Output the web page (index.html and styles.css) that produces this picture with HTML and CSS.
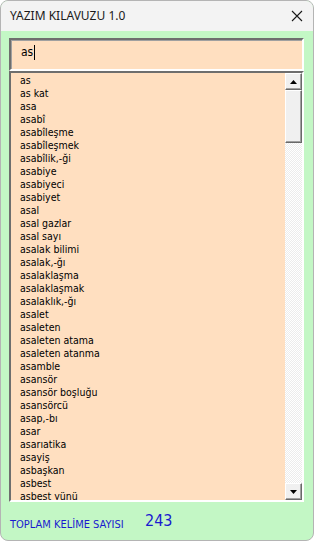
FILE: index.html
```html
<!DOCTYPE html>
<html lang="tr">
<head>
<meta charset="utf-8">
<title>YAZIM KILAVUZU 1.0</title>
<link rel="stylesheet" href="styles.css">
</head>
<body>
<div class="window">
  <div class="titlebar">
    <span class="title">YAZIM KILAVUZU 1.0</span>
    <svg class="close" width="12" height="12" viewBox="0 0 12 12"><path d="M1 1L11 11M11 1L1 11" stroke="#1a1a1a" stroke-width="1.1" fill="none"/></svg>
  </div>
  <div class="content">
    <div class="input"><span class="typed">as</span><span class="caret"></span></div>
    <div class="list">
      <ul class="items">
        <li>as</li><li>as kat</li><li>asa</li><li>asabî</li><li>asabîleşme</li><li>asabîleşmek</li><li>asabîlik,-ği</li><li>asabiye</li><li>asabiyeci</li><li>asabiyet</li><li>asal</li><li>asal gazlar</li><li>asal sayı</li><li>asalak bilimi</li><li>asalak,-ğı</li><li>asalaklaşma</li><li>asalaklaşmak</li><li>asalaklık,-ğı</li><li>asalet</li><li>asaleten</li><li>asaleten atama</li><li>asaleten atanma</li><li>asamble</li><li>asansör</li><li>asansör boşluğu</li><li>asansörcü</li><li>asap,-bı</li><li>asar</li><li>asarıatika</li><li>asayiş</li><li>asbaşkan</li><li>asbest</li><li>asbest yünü</li>
      </ul>
      <div class="scrollbar">
        <div class="btn"><svg width="7" height="4" viewBox="0 0 7 4"><path d="M3.5 0L7 4H0Z" fill="#000"/></svg></div>
        <div class="track"><div class="thumb"></div></div>
        <div class="btn"><svg width="7" height="4" viewBox="0 0 7 4"><path d="M0 0H7L3.5 4Z" fill="#000"/></svg></div>
      </div>
    </div>
    <div class="footer">
      <span class="label">TOPLAM KELİME SAYISI</span>
      <span class="count">243</span>
    </div>
  </div>
</div>
</body>
</html>
```
FILE: styles.css
```css
html, body {
  margin: 0;
  padding: 0;
  background: #ffffff;
}
.window {
  box-sizing: border-box;
  width: 314px;
  height: 541px;
  border: 1px solid #b4b4b4;
  border-radius: 8px;
  overflow: hidden;
  display: flex;
  flex-direction: column;
  background: #c3f7c5;
}
.titlebar {
  height: 30px;
  flex: none;
  background: #f3f3f3;
  display: flex;
  align-items: center;
  justify-content: space-between;
  padding: 0 9px 0 9px;
}
.title {
  font-family: "Noto Sans", "Open Sans", sans-serif;
  font-size: 12px;
  color: #1a1a1a;
  margin-top: -1px;
}
.close {
  margin-top: -1px;
  margin-right: 1px;
}
.content {
  flex: 1;
  display: flex;
  flex-direction: column;
  padding: 7px 9px 0 8px;
}
.input {
  box-sizing: border-box;
  height: 33px;
  flex: none;
  background: #ffdfc0;
  border-style: solid;
  border-width: 2px;
  border-color: #6e6e6e #ffffff #ffffff #6e6e6e;
  box-shadow: inset 1px 1px 0 #a0a0a0;
  display: flex;
  align-items: flex-start;
  padding: 5px 0 0 10px;
  font-family: "DejaVu Sans Condensed", "DejaVu Sans", sans-serif;
  font-size: 12px;
  color: #000;
}
.caret {
  display: inline-block;
  width: 1px;
  height: 15px;
  background: #000;
  margin-left: 1px;
  margin-top: 0px;
}
.list {
  box-sizing: border-box;
  height: 431px;
  flex: none;
  background: #ffdfc0;
  border-style: solid;
  border-width: 2px;
  border-color: #6e6e6e #ffffff #ffffff #6e6e6e;
  display: flex;
  overflow: hidden;
}
.items {
  list-style: none;
  margin: 0;
  padding: 1px 0 0 9px;
  flex: 1;
  font-family: "DejaVu Sans Condensed", "DejaVu Sans", sans-serif;
  font-size: 10.5px;
  line-height: 13px;
  color: #000;
}
.scrollbar {
  width: 17px;
  flex: none;
  display: flex;
  flex-direction: column;
}
.btn {
  box-sizing: border-box;
  height: 17px;
  flex: none;
  background: #f0f0f0;
  border-style: solid;
  border-width: 1px;
  border-color: #ffffff #696969 #696969 #ffffff;
  box-shadow: inset -1px -1px 0 #a0a0a0;
  display: flex;
  align-items: center;
  justify-content: center;
}
.track {
  flex: 1;
  background: repeating-conic-gradient(#ffffff 0 25%, #ececec 0 50%) 0 0 / 2px 2px;
}
.thumb {
  box-sizing: border-box;
  height: 53px;
  background: #f0f0f0;
  border-style: solid;
  border-width: 1px;
  border-color: #ffffff #696969 #696969 #ffffff;
  box-shadow: inset -1px -1px 0 #a0a0a0;
}
.footer {
  flex: 1;
  display: flex;
  align-items: center;
  padding-left: 1px;
}
.label {
  font-family: "DejaVu Sans Condensed", "DejaVu Sans", sans-serif;
  font-size: 11px;
  color: #1a1ad0;
  margin-top: 6px;
  width: 135px;
}
.count {
  font-family: "DejaVu Sans Condensed", "DejaVu Sans", sans-serif;
  font-size: 16px;
  color: #1a1ad0;
  margin-top: -1px;
}
```
